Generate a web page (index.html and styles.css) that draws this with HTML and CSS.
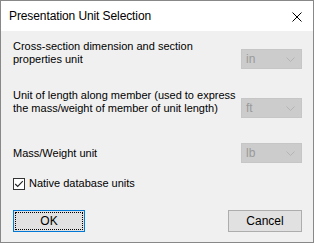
FILE: index.html
```html
<!DOCTYPE html>
<html lang="en">
<head>
  <meta charset="UTF-8">
  <title>Presentation Unit Selection</title>
  <link rel="stylesheet" href="styles.css">
</head>
<body>
  <div class="dialog">
    <div class="titlebar">
      <span class="title">Presentation Unit Selection</span>
      <svg class="close" width="10" height="10" viewBox="0 0 10 10">
        <path d="M0.5 0.5 L9.5 9.5 M9.5 0.5 L0.5 9.5" stroke="#000" stroke-width="1" fill="none"/>
      </svg>
    </div>
    <div class="content">
      <div class="row row-1">
        <div class="label">Cross-section dimension and section<br>properties unit</div>
        <div class="combo combo-1"><span>in</span><svg width="9" height="5" viewBox="0 0 9 5"><path d="M0.5 0.5 L4.5 4.5 L8.5 0.5" stroke="#b4b4b4" fill="none"/></svg></div>
      </div>
      <div class="row row-2">
        <div class="label">Unit of length along member (used to express<br>the mass/weight of member of unit length)</div>
        <div class="combo combo-2"><span>ft</span><svg width="9" height="5" viewBox="0 0 9 5"><path d="M0.5 0.5 L4.5 4.5 L8.5 0.5" stroke="#b4b4b4" fill="none"/></svg></div>
      </div>
      <div class="row row-3">
        <div class="label label-3">Mass/Weight unit</div>
        <div class="combo"><span>lb</span><svg width="9" height="5" viewBox="0 0 9 5"><path d="M0.5 0.5 L4.5 4.5 L8.5 0.5" stroke="#b4b4b4" fill="none"/></svg></div>
      </div>
      <label class="check">
        <svg width="12" height="12" viewBox="0 0 12 12">
          <rect x="0.5" y="0.5" width="11" height="11" fill="#fff" stroke="#333"/>
          <path d="M2.2 6 L4.7 8.5 L9.8 3.2" stroke="#222" stroke-width="1.1" fill="none"/>
        </svg>
        <span>Native database units</span>
      </label>
      <div class="buttons">
        <button class="btn btn-ok"><span class="focus">OK</span></button>
        <button class="btn">Cancel</button>
      </div>
    </div>
  </div>
</body>
</html>
```

FILE: styles.css
```css
html, body { margin: 0; padding: 0; }
body { font-family: "Liberation Sans", Arial, sans-serif; font-size: 11px; color: #000; background: #fff; }
.dialog { width: 312px; height: 241px; border: 1px solid #888; background: #f0f0f0; display: flex; flex-direction: column; }
.titlebar { height: 30px; background: #fff; display: flex; align-items: center; justify-content: space-between; padding: 0 11px 0 8px; }
.title { font-size: 12px; color: #000; letter-spacing: -0.1px; }
.close { margin-top: 1px; }
.content { flex: 1; padding: 9px 11px 0 12px; line-height: 13px; }
.row { display: flex; justify-content: space-between; align-items: flex-start; }
.row-2 { margin-top: 20px; }
.row-3 { margin-top: 25px; align-items: center; }
.combo { width: 49px; height: 18px; border: 1px solid #c6c6c6; background: #cccccc; color: #9a9a9a; display: flex; align-items: center; justify-content: space-between; padding: 0 6px 0 4px; box-sizing: content-box; }
.combo span { font-size: 12px; }
.combo-1, .combo-2 { margin-top: 9px; }
.check { display: flex; align-items: center; gap: 4px; margin-top: 14px; }
.buttons { display: flex; justify-content: space-between; margin-top: 20px; }
.btn { width: 74px; height: 22px; font-family: "Liberation Sans", Arial, sans-serif; font-size: 12px; background: #e1e1e1; border: 1px solid #adadad; padding: 0; color: #000; }
.btn-ok { width: 72px; border: 1px solid #0078d7; padding: 1px; }
.btn-ok .focus { display: flex; align-items: center; justify-content: center; height: 100%; border: 1px dotted #000; box-sizing: border-box; }
```
